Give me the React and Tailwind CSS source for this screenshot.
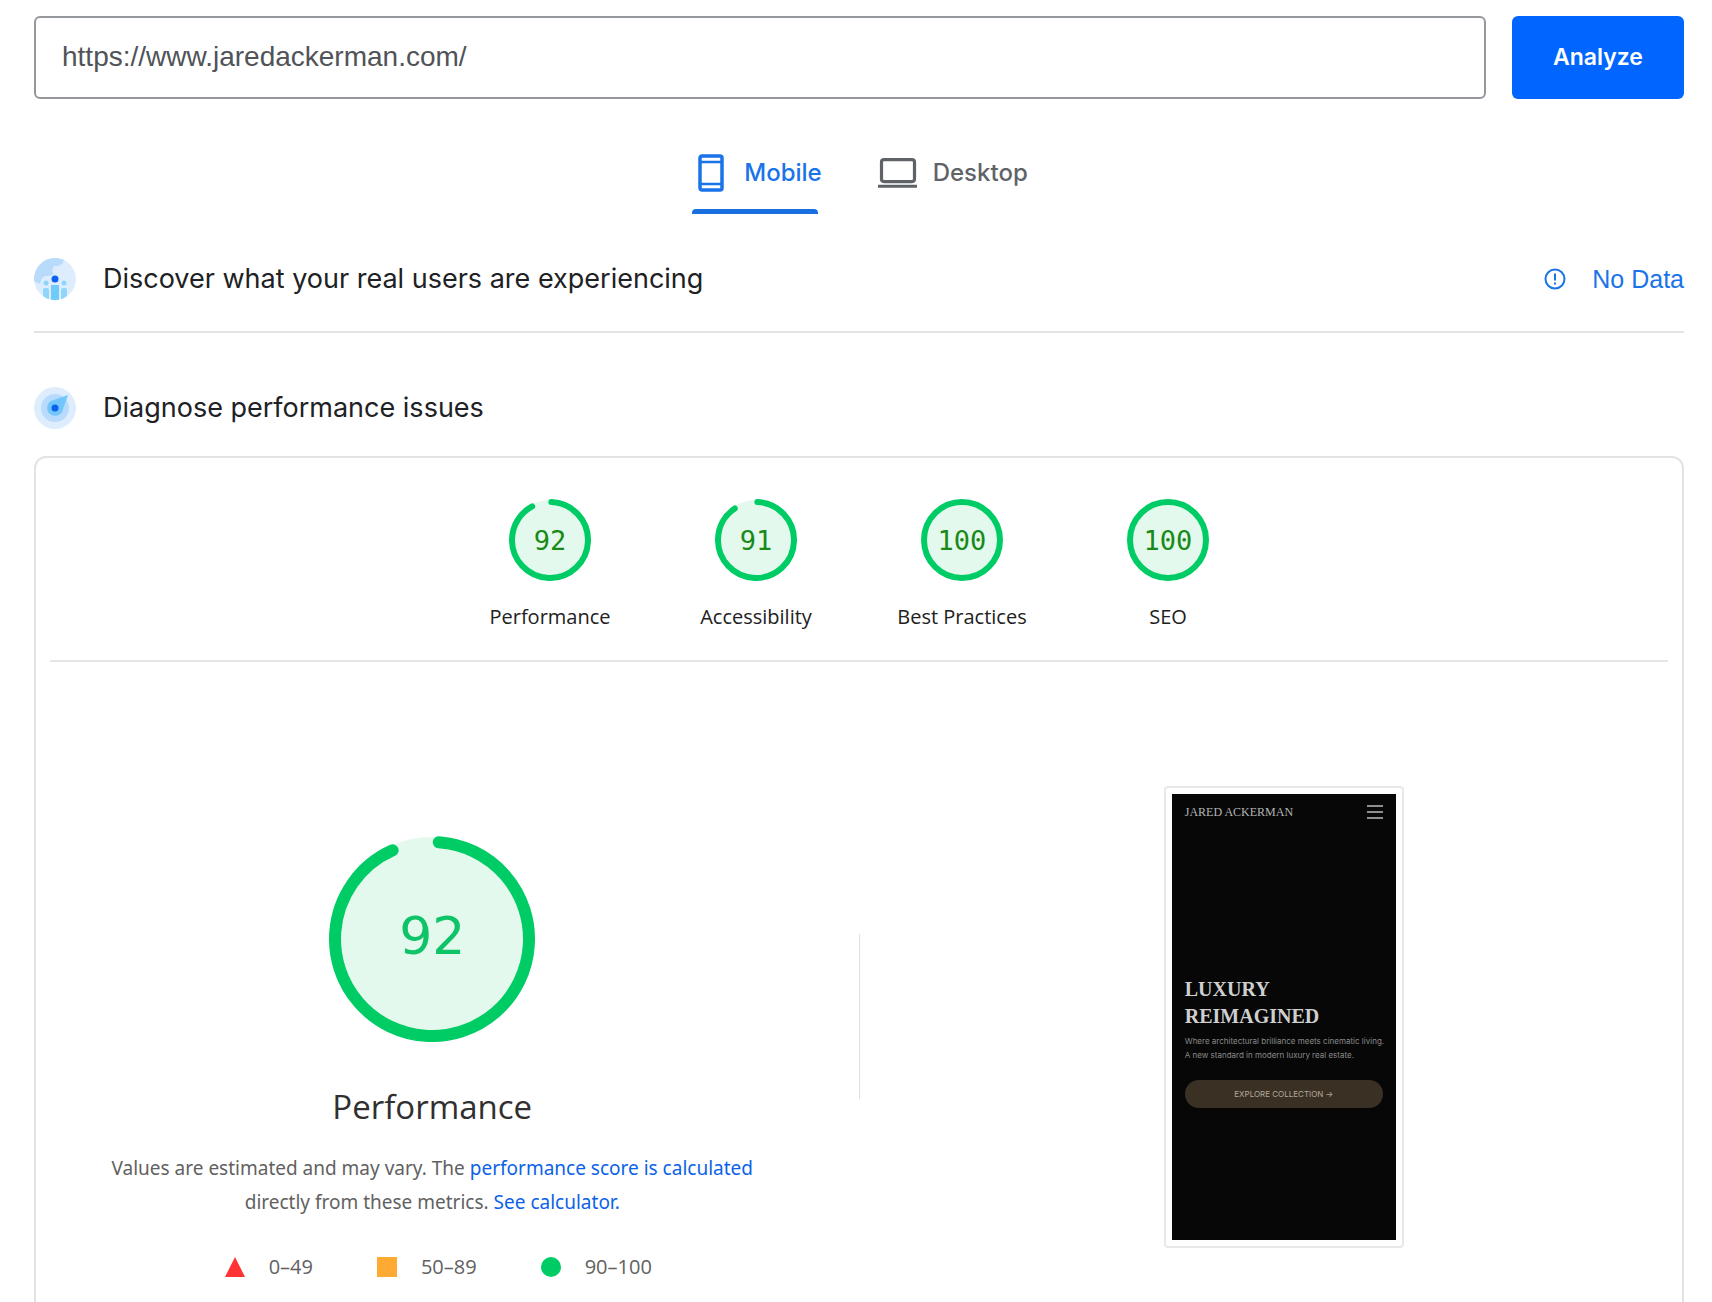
import { useState } from 'react';
import clsx from 'clsx';

const SANS = "font-['Open_Sans','Noto_Sans',sans-serif]";
const DISPLAY = "font-['Inter',sans-serif]";
const ARIAL = "font-['Liberation_Sans',Arial,sans-serif]";
const MONO = "font-['DejaVu_Sans_Mono',monospace]";

const scores = [
  { label: 'Performance', value: 92, start: 2, sweep: 330 },
  { label: 'Accessibility', value: 91, start: 2, sweep: 324 },
  { label: 'Best Practices', value: 100, start: 0, sweep: 360 },
  { label: 'SEO', value: 100, start: 0, sweep: 360 },
];

function Ring({ size, stroke, start, sweep }) {
  const c = size / 2;
  const r = c - stroke / 2;
  const full = sweep >= 360;
  return (
    <svg width={size} height={size} viewBox={`0 0 ${size} ${size}`} className="col-start-1 row-start-1">
      <circle cx={c} cy={c} r={c - 1} fill="#e4f9ed" />
      <circle
        cx={c}
        cy={c}
        r={r}
        fill="none"
        stroke="#00cc66"
        strokeWidth={stroke}
        strokeLinecap="round"
        pathLength="360"
        strokeDasharray={full ? undefined : `${sweep} 360`}
        transform={`rotate(${start - 90} ${c} ${c})`}
      />
    </svg>
  );
}

function PhoneIcon() {
  return (
    <svg width="26" height="38" viewBox="0 0 26 38" fill="none" stroke="currentColor" strokeWidth="3.5">
      <rect x="2" y="2" width="22" height="34" rx="2" />
      <path d="M2 8h22M2 30h22" strokeWidth="2.5" />
    </svg>
  );
}

function LaptopIcon() {
  return (
    <svg width="39" height="30" viewBox="0 0 39 30" fill="none" stroke="currentColor" strokeWidth="3.2">
      <rect x="3.500" y="1.600" width="33" height="22" rx="2.500" />
      <path d="M0 28.200h39" strokeWidth="3" />
    </svg>
  );
}

function UsersIcon() {
  return (
    <svg width="42" height="42" viewBox="0 0 42 42" className="shrink-0">
      <defs>
        <clipPath id="users-clip"><circle cx="21" cy="21" r="21" /></clipPath>
      </defs>
      <g clipPath="url(#users-clip)">
        <rect width="42" height="42" fill="#deedfd" />
        <path d="M0 0h30l-1 5-4 3h-5l-2 5 2 3-5 2h-4l-3 2-2 6-6-3z" fill="#b8dafb" />
        <g fill="#8fd6fa">
          <circle cx="12" cy="25" r="2.500" />
          <circle cx="30" cy="25" r="2.500" />
          <path d="M9 42V32a2 2 0 0 1 2-2h2a2 2 0 0 1 2 2v10z" />
          <path d="M27 42V32a2 2 0 0 1 2-2h2a2 2 0 0 1 2 2v10z" />
        </g>
        <rect x="17" y="27" width="8" height="15" fill="#6fcbfa" />
      </g>
      <circle cx="21" cy="21" r="3.500" fill="#0b62f0" />
    </svg>
  );
}

function CompassIcon() {
  return (
    <svg width="42" height="42" viewBox="0 0 42 42" className="shrink-0">
      <circle cx="21" cy="21" r="21" fill="#deedfd" />
      <circle cx="21" cy="21" r="14" fill="#b8dafb" />
      <path d="M34 8 28 25a8 8 0 1 1-11-11z" fill="#72c6fb" />
      <circle cx="21" cy="21" r="3.500" fill="#0b62f0" />
    </svg>
  );
}

function SiteSnapshot() {
  return (
    <div className="rounded border-2 border-[#e8e8e8] bg-white p-1.5">
      <div className="flex h-[446px] w-[224px] flex-col bg-[#070707] px-[13px]">
        <div className="flex items-center justify-between pt-2.5">
          <span className="font-['Liberation_Serif',serif] text-xs leading-4 text-[#b5b5b5]">JARED ACKERMAN</span>
          <svg width="16" height="14" viewBox="0 0 16 14" stroke="#8f8f8f" strokeWidth="2">
            <path d="M0 1h16M0 7h16M0 13h16" />
          </svg>
        </div>
        <h3 className="mt-[156px] font-['Liberation_Serif',serif] text-xl leading-[27px] font-bold text-[#cfcfcf]">
          LUXURY<br />REIMAGINED
        </h3>
        <p className={clsx(DISPLAY, 'mt-1 text-[8px] leading-[14px] whitespace-nowrap text-[#8a8a8a]')}>
          Where architectural brilliance meets cinematic living.<br />
          A new standard in modern luxury real estate.
        </p>
        <button className={clsx(DISPLAY, 'mt-[18px] h-7 rounded-full bg-[#3a3024] text-[8px] text-[#b3aa9d]')}>
          EXPLORE COLLECTION →
        </button>
      </div>
    </div>
  );
}

export default function App() {
  const [url, setUrl] = useState('https://www.jaredackerman.com/');

  return (
    <main className="h-screen overflow-hidden bg-white pt-4 pr-7 pl-[34px]">
      {/* Search */}
      <form className="flex gap-[26px]" onSubmit={(e) => e.preventDefault()}>
        <input
          type="text"
          aria-label="Web page URL"
          value={url}
          onChange={(e) => setUrl(e.target.value)}
          className={clsx(ARIAL, 'h-[83px] min-w-0 flex-1 rounded-md border-2 border-[#94979b] px-[26px] pb-0.5 text-[28px] text-[#505357]')}
        />
        <button type="submit" className={clsx(DISPLAY, 'w-[172px] rounded-md bg-[#0066ff] text-[23px] font-semibold text-white')}>
          Analyze
        </button>
      </form>

      {/* Device tabs */}
      <div role="tablist" className={clsx(DISPLAY, 'mt-[54px] flex justify-center gap-14 pl-0.5 text-2xl font-medium')}>
        <button role="tab" aria-selected="true" className="flex flex-col gap-4 text-[#1a73e8]">
          <span className="flex h-10 items-center gap-5 pl-1.5"><PhoneIcon />Mobile</span>
          <span className="h-[5px] w-[126px] rounded-t bg-[#1a6fe0]" />
        </button>
        <button role="tab" aria-selected="false" className="flex h-10 items-center gap-4 text-[#5f6368]">
          <LaptopIcon />Desktop
        </button>
      </div>

      {/* Field data */}
      <section className="mt-11 flex items-center justify-between border-b-2 border-[#e3e3e3] pb-[31px]">
        <div className="flex items-center gap-[27px]">
          <UsersIcon />
          <h2 className={clsx(DISPLAY, 'text-[27px] leading-[42px] text-[#202124]')}>Discover what your real users are experiencing</h2>
        </div>
        <a href="#field" className={clsx(ARIAL, 'flex items-center gap-[26px] text-[25px] leading-[42px] text-[#1a73e8]')}>
          <svg width="22" height="22" viewBox="0 0 22 22" fill="none" stroke="currentColor" strokeWidth="2">
            <circle cx="11" cy="11" r="9.500" />
            <path d="M11 5.500v7M11 14.500v2" />
          </svg>
          No Data
        </a>
      </section>

      {/* Lab data */}
      <div className="mt-[54px] flex items-center gap-[27px]">
        <CompassIcon />
        <h2 className={clsx(DISPLAY, 'text-[27px] leading-[42px] text-[#202124]')}>Diagnose performance issues</h2>
      </div>

      <section className="mt-[27px] rounded-t-xl border-2 border-b-0 border-[#e3e3e3] px-3.5 pb-10">
        <div className="flex justify-center border-b-2 border-[#e6e6e6] pt-[41px] pb-[27px]">
          {scores.map((s) => (
            <a key={s.label} href="#score" className="flex w-[206px] flex-col items-center gap-5">
              <span className="grid place-items-center">
                <Ring size={82} stroke={6} start={s.start} sweep={s.sweep} />
                <span className={clsx(MONO, 'col-start-1 row-start-1 pt-0.5 text-[27px] text-[#188a18]')}>{s.value}</span>
              </span>
              <span className={clsx(SANS, 'text-xl leading-8 text-[#212121]')}>{s.label}</span>
            </a>
          ))}
        </div>

        <div className="grid grid-cols-[1fr_1px_1fr] items-center gap-x-11 pt-[88px]">
          <div className={clsx(SANS, 'flex flex-col items-center pt-[86px]')}>
            <div className="grid place-items-center">
              <Ring size={206} stroke={12} start={4} sweep={332} />
              <span className="col-start-1 row-start-1 pb-1.5 font-['DejaVu_Sans',sans-serif] text-[52px] text-[#0fc368]">92</span>
            </div>
            <h3 className="mt-[43px] text-[33px] leading-[44px] text-[#303030]">Performance</h3>
            <p className="mt-[22px] text-center font-['Noto_Sans',sans-serif] text-[19px] leading-[34px] text-[#616161]">
              Values are estimated and may vary. The <a href="#score" className="text-[#0b62e8]">performance score is calculated</a>
              <br />
              directly from these metrics. <a href="#calc" className="text-[#0b62e8]">See calculator.</a>
            </p>
            <div className="mt-8 flex items-center gap-16 pl-3 text-xl leading-8 text-[#616161]">
              <span className="flex items-center gap-6">
                <svg width="20" height="20" viewBox="0 0 20 20"><path d="M10 0 20 20H0z" fill="#ff3333" /></svg>
                0–49
              </span>
              <span className="flex items-center gap-6">
                <span className="size-5 bg-[#ffaa33]" />
                50–89
              </span>
              <span className="flex items-center gap-6">
                <span className="size-5 rounded-full bg-[#00cc66]" />
                90–100
              </span>
            </div>
          </div>
          <div className="h-[165px] bg-[#e0e0e0]" />
          <div className="flex justify-center pr-1">
            <SiteSnapshot />
          </div>
        </div>
      </section>
    </main>
  );
}
